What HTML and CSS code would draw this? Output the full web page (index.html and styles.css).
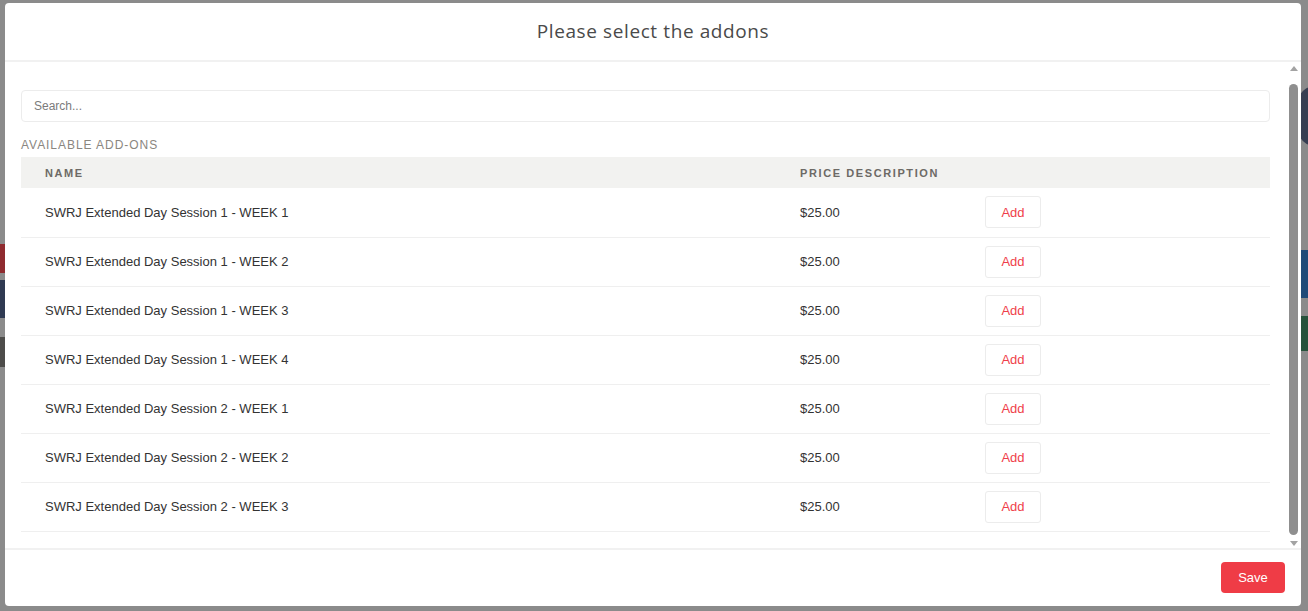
FILE: index.html
```html
<!DOCTYPE html>
<html lang="en">
<head>
<meta charset="utf-8">
<title>Please select the addons</title>
<link rel="stylesheet" href="styles.css">
</head>
<body>
<div class="backdrop">
  <div class="bg-block bg-red"></div>
  <div class="bg-block bg-navy"></div>
  <div class="bg-block bg-dark"></div>
  <div class="bg-block bg-circle"></div>
  <div class="bg-block bg-blue"></div>
  <div class="bg-block bg-green"></div>
</div>
<div class="modal">
  <header class="modal-header">
    <h2 class="modal-title">Please select the addons</h2>
  </header>
  <div class="modal-body">
    <div class="body-content">
      <input class="search" type="text" placeholder="Search...">
      <div class="section-label">AVAILABLE ADD-ONS</div>
      <table class="addons">
        <thead>
          <tr><th class="col-name">NAME</th><th class="col-price">PRICE DESCRIPTION</th><th class="col-action"></th></tr>
        </thead>
        <tbody>
          <tr><td class="col-name">SWRJ Extended Day Session 1 - WEEK 1</td><td class="col-price">$25.00</td><td class="col-action"><button class="btn-add">Add</button></td></tr>
          <tr><td class="col-name">SWRJ Extended Day Session 1 - WEEK 2</td><td class="col-price">$25.00</td><td class="col-action"><button class="btn-add">Add</button></td></tr>
          <tr><td class="col-name">SWRJ Extended Day Session 1 - WEEK 3</td><td class="col-price">$25.00</td><td class="col-action"><button class="btn-add">Add</button></td></tr>
          <tr><td class="col-name">SWRJ Extended Day Session 1 - WEEK 4</td><td class="col-price">$25.00</td><td class="col-action"><button class="btn-add">Add</button></td></tr>
          <tr><td class="col-name">SWRJ Extended Day Session 2 - WEEK 1</td><td class="col-price">$25.00</td><td class="col-action"><button class="btn-add">Add</button></td></tr>
          <tr><td class="col-name">SWRJ Extended Day Session 2 - WEEK 2</td><td class="col-price">$25.00</td><td class="col-action"><button class="btn-add">Add</button></td></tr>
          <tr><td class="col-name">SWRJ Extended Day Session 2 - WEEK 3</td><td class="col-price">$25.00</td><td class="col-action"><button class="btn-add">Add</button></td></tr>
        </tbody>
      </table>
    </div>
    <div class="scrollbar">
      <span class="arrow arrow-up"></span>
      <span class="thumb"></span>
      <span class="arrow arrow-down"></span>
    </div>
  </div>
  <footer class="modal-footer">
    <button class="btn-save">Save</button>
  </footer>
</div>
</body>
</html>
```

FILE: styles.css
```css
* { box-sizing: border-box; }
html, body {
  margin: 0;
  height: 100%;
}
body {
  background: #8b8b8b;
  font-family: "Liberation Sans", Arial, sans-serif;
  overflow: hidden;
  position: relative;
}
.backdrop {
  position: absolute;
  inset: 0;
}
.bg-block { position: absolute; }
.bg-red { left: 0; top: 244px; width: 6px; height: 29px; background: #8f2b2f; }
.bg-navy { left: 0; top: 280px; width: 6px; height: 38px; background: #2f3a52; }
.bg-dark { left: 0; top: 337px; width: 6px; height: 30px; background: #4d4c4a; }
.bg-circle { left: 1294px; top: 86px; width: 40px; height: 60px; border-radius: 50%; background: #363e52; }
.bg-blue { left: 1301px; top: 250px; width: 7px; height: 48px; background: #1f4a78; }
.bg-green { left: 1301px; top: 316px; width: 7px; height: 35px; background: #27523b; }

.modal {
  position: absolute;
  left: 5px;
  top: 3px;
  width: 1296px;
  height: 603px;
  background: #fff;
  border-radius: 4px;
  display: flex;
  flex-direction: column;
}
.modal-header {
  height: 59px;
  border-bottom: 2px solid #f1f1f1;
  display: flex;
  align-items: center;
  justify-content: center;
  flex: none;
}
.modal-title {
  margin: 0;
  font-family: "Open Sans", sans-serif;
  font-weight: 400;
  font-size: 19px;
  color: #4a4a4a;
  letter-spacing: 0.6px;
  padding-bottom: 2px;
}
.modal-body {
  flex: 1;
  display: flex;
  min-height: 0;
}
.body-content {
  flex: 1;
  padding: 28px 16px 0 16px;
}
.search {
  display: block;
  width: 100%;
  height: 32px;
  border: 1px solid #ececec;
  border-radius: 4px;
  padding: 0 12px;
  font-family: "Liberation Sans", Arial, sans-serif;
  font-size: 12px;
  color: #333;
  outline: none;
}
.search::placeholder { color: #7b7b7b; }
.section-label {
  margin-top: 16px;
  font-size: 12px;
  color: #8a8680;
  letter-spacing: 0.95px;
  line-height: 14px;
}
.addons {
  margin-top: 5px;
  width: 100%;
  border-collapse: collapse;
}
.addons th {
  background: #f2f2f0;
  height: 31px;
  text-align: left;
  font-size: 11px;
  font-weight: 700;
  letter-spacing: 1.6px;
  color: #6d6a66;
  padding: 0;
}
.addons td {
  height: 49px;
  border-bottom: 1px solid #efefef;
  font-size: 13px;
  color: #333;
  padding: 0;
}
.col-name { padding-left: 24px !important; width: 779px; }
.col-price { width: 185px; }
.btn-add {
  width: 56px;
  height: 32px;
  background: #fff;
  border: 1px solid #ececec;
  border-radius: 3px;
  color: #ef3e4a;
  font-family: "Liberation Sans", Arial, sans-serif;
  font-size: 13px;
  cursor: pointer;
}
.scrollbar {
  flex: none;
  width: 15px;
  display: flex;
  flex-direction: column;
  align-items: center;
  padding-top: 4px;
  padding-bottom: 2px;
}
.arrow {
  width: 0;
  height: 0;
  border-left: 4px solid transparent;
  border-right: 4px solid transparent;
  flex: none;
}
.arrow-up { border-bottom: 5px solid #a3a3a3; margin-bottom: 13px; }
.arrow-down { border-top: 5px solid #a3a3a3; margin-top: 6px; }
.thumb {
  flex: 1;
  width: 9px;
  background: #8f8f8f;
  border-radius: 5px;
}
.modal-footer {
  flex: none;
  height: 58px;
  border-top: 2px solid #f1f1f1;
  display: flex;
  align-items: center;
  justify-content: flex-end;
  padding-right: 16px;
  padding-bottom: 1px;
}
.btn-save {
  width: 64px;
  height: 31px;
  background: #ef3c46;
  border: none;
  border-radius: 4px;
  color: #fff;
  font-family: "Liberation Sans", Arial, sans-serif;
  font-size: 13px;
  cursor: pointer;
}
```
